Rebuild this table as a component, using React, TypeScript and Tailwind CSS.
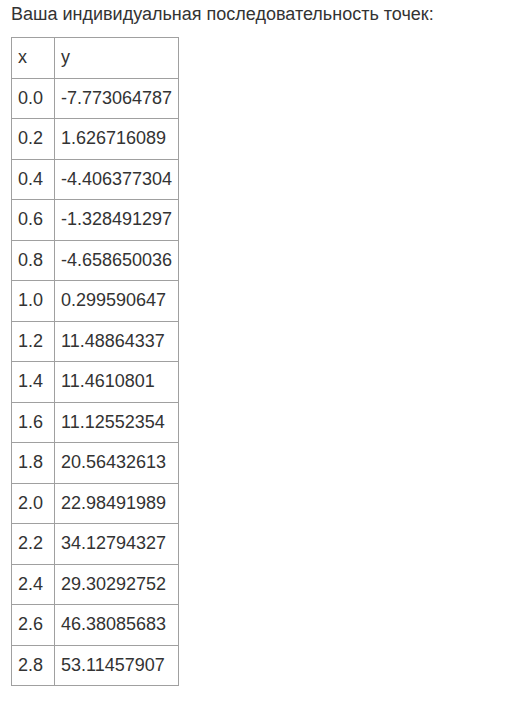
import React from "react";

// Individual point sequence (x, y)
const points: [string, string][] = [
  ["0.0", "-7.773064787"],
  ["0.2", "1.626716089"],
  ["0.4", "-4.406377304"],
  ["0.6", "-1.328491297"],
  ["0.8", "-4.658650036"],
  ["1.0", "0.299590647"],
  ["1.2", "11.48864337"],
  ["1.4", "11.4610801"],
  ["1.6", "11.12552354"],
  ["1.8", "20.56432613"],
  ["2.0", "22.98491989"],
  ["2.2", "34.12794327"],
  ["2.4", "29.30292752"],
  ["2.6", "46.38085683"],
  ["2.8", "53.11457907"],
];

const cell = "border border-[#a0a0a0] h-[40.5px] pl-[6px] pr-0 py-0 align-middle text-left font-normal";

export default function App() {
  return (
    <div className="min-h-[702px] bg-white px-[11px] pt-[1px] text-[18px] leading-[27px] text-[#333] font-['Liberation_Sans',Arial,sans-serif]">
      <p className="mb-[9px]">Ваша индивидуальная последовательность точек:</p>
      <table className="border-collapse table-fixed w-[167px]">
        <colgroup>
          <col className="w-[43px]" />
          <col className="w-[124px]" />
        </colgroup>
        <thead>
          <tr>
            <th className={cell}>x</th>
            <th className={cell}>y</th>
          </tr>
        </thead>
        <tbody>
          {points.map(([x, y]) => (
            <tr key={x}>
              <td className={cell}>{x}</td>
              <td className={cell}>{y}</td>
            </tr>
          ))}
        </tbody>
      </table>
    </div>
  );
}
